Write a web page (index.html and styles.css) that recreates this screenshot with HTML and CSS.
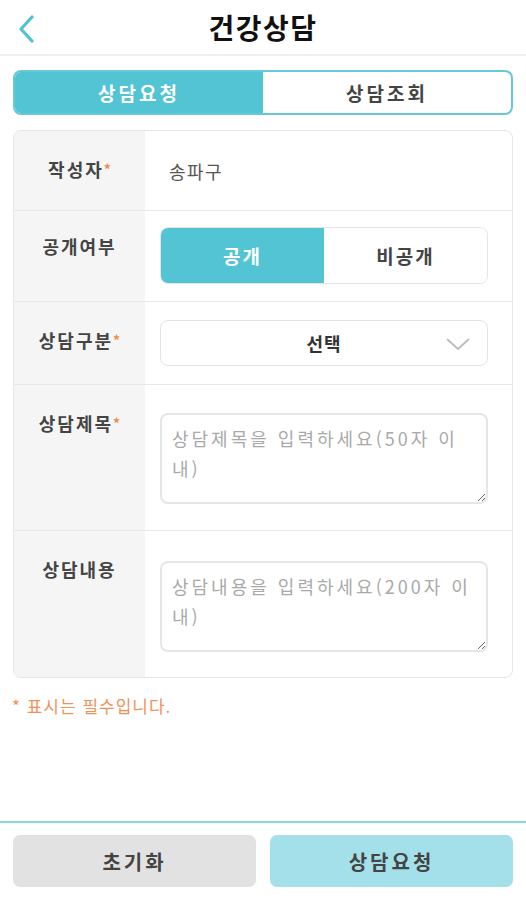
FILE: index.html
```html
<!DOCTYPE html>
<html lang="ko">
<head>
  <meta charset="UTF-8" />
  <meta name="viewport" content="width=device-width, initial-scale=1.0" />
  <title>건강상담</title>
  <link rel="stylesheet" href="styles.css">
</head>
<body>
  <header class="topo">
    <a class="voltar" href="#">
      <svg width="18" height="28" viewBox="0 0 18 28"><path d="M15 2 L4 14 L15 26" fill="none" stroke="#4dc3d1" stroke-width="3.2" stroke-linecap="round" stroke-linejoin="round"/></svg>
    </a>
    <h1>건강상담</h1>
  </header>

  <div class="abas">
    <a class="aba ativa" href="#">상담요청</a>
    <a class="aba" href="#">상담조회</a>
  </div>

  <div class="cartao">
    <div class="linha linha-autor">
      <div class="rotulo">작성자<span class="obrig">*</span></div>
      <div class="campo campo-texto">송파구</div>
    </div>
    <div class="linha">
      <div class="rotulo rotulo-alto">공개여부</div>
      <div class="campo campo-alternar">
        <div class="alternar">
          <button class="opcao ligado">공개</button>
          <button class="opcao">비공개</button>
        </div>
      </div>
    </div>
    <div class="linha">
      <div class="rotulo">상담구분<span class="obrig">*</span></div>
      <div class="campo campo-seletor">
        <div class="seletor">
          <span>선택</span>
          <svg class="seta" width="26" height="14" viewBox="0 0 26 14"><path d="M2 2 L13 12 L24 2" fill="none" stroke="#bdbdbd" stroke-width="2"/></svg>
        </div>
      </div>
    </div>
    <div class="linha linha-area">
      <div class="rotulo">상담제목<span class="obrig">*</span></div>
      <div class="campo">
        <textarea placeholder="상담제목을 입력하세요(50자 이내)"></textarea>
      </div>
    </div>
    <div class="linha linha-area ultima">
      <div class="rotulo">상담내용</div>
      <div class="campo">
        <textarea placeholder="상담내용을 입력하세요(200자 이내)"></textarea>
      </div>
    </div>
  </div>

  <p class="nota">* 표시는 필수입니다.</p>

  <footer class="rodape">
    <button class="botao cinza">초기화</button>
    <button class="botao azul">상담요청</button>
  </footer>
</body>
</html>
```

FILE: styles.css
```css
body {
  margin: 0;
  background: #fff;
  color: #333;
  font-family: "Noto Sans CJK KR", "Noto Sans", sans-serif;
}

.topo {
  height: 54px;
  border-bottom: 2px solid #efefef;
  display: flex;
  align-items: center;
  justify-content: center;
  position: relative;
}

.voltar {
  position: absolute;
  left: 17px;
  top: 15px;
}

.topo h1 {
  margin: 0;
  font-size: 28px;
  font-weight: bold;
  color: #111;
  letter-spacing: 1.5px;
}

.abas {
  display: flex;
  margin: 14px 13px 0 13px;
  height: 45px;
  border: 2px solid #66c9d6;
  border-radius: 8px;
  overflow: hidden;
  box-sizing: border-box;
}

.aba {
  flex: 1;
  display: flex;
  align-items: center;
  justify-content: center;
  font-size: 19px;
  font-weight: bold;
  letter-spacing: 3px;
  color: #444;
  text-decoration: none;
}

.aba.ativa {
  background: #52c4d3;
  color: #fff;
}

.cartao {
  margin: 15px 13px 0 13px;
  border: 1px solid #e6e6e6;
  border-radius: 8px;
  overflow: hidden;
}

.linha {
  display: grid;
  grid-template-columns: 131px 1fr;
  border-bottom: 1px solid #e8e8e8;
}

.linha.ultima {
  border-bottom: none;
}

.rotulo {
  background: #f5f5f5;
  text-align: center;
  font-size: 18px;
  font-weight: bold;
  letter-spacing: 2px;
  color: #444;
  padding-top: 26px;
  line-height: 24px;
}

.rotulo-alto {
  padding-top: 23px;
}

.obrig {
  color: #f28a4c;
  font-size: 14px;
  vertical-align: top;
  letter-spacing: 0;
}

.campo {
  padding: 17px 24px 17px 15px;
}

.linha-autor {
  height: 79px;
}

.campo-texto {
  display: flex;
  align-items: center;
  padding: 0 0 0 24px;
  font-size: 18px;
  color: #555;
  letter-spacing: 1.5px;
}

.campo-alternar {
  padding-top: 16px;
}

.alternar {
  display: flex;
  height: 57px;
  border: 1px solid #e5e5e5;
  border-radius: 8px;
  overflow: hidden;
  box-sizing: border-box;
}

.opcao {
  flex: 1;
  border: none;
  background: #fff;
  font-family: inherit;
  font-size: 19px;
  font-weight: bold;
  letter-spacing: 2px;
  color: #444;
}

.opcao.ligado {
  background: #52c4d3;
  color: #fff;
}

.campo-seletor {
  padding-top: 18px;
  padding-bottom: 18px;
}

.seletor {
  height: 46px;
  border: 1px solid #e3e3e3;
  border-radius: 8px;
  box-sizing: border-box;
  display: flex;
  align-items: center;
  justify-content: center;
  position: relative;
  font-size: 18px;
  font-weight: bold;
  color: #333;
  letter-spacing: 1px;
}

.seta {
  position: absolute;
  right: 16px;
  top: 16px;
}

.linha-area .campo {
  padding-top: 28px;
  padding-bottom: 26px;
}

.linha-area.ultima .campo {
  padding-top: 30px;
  padding-bottom: 25px;
}

textarea {
  display: block;
  width: 100%;
  height: 91px;
  box-sizing: border-box;
  border: 2px solid #e6e6e6;
  border-radius: 8px;
  padding: 8px 10px;
  font-family: inherit;
  font-size: 18px;
  line-height: 30px;
  letter-spacing: 3px;
  color: #333;
  outline: none;
}

textarea::placeholder {
  color: #a9a9a9;
}

.nota {
  margin: 15px 12px 0 12px;
  font-size: 17px;
  color: #f2925b;
  letter-spacing: 1px;
}

.rodape {
  position: absolute;
  left: 0;
  right: 0;
  top: 821px;
  border-top: 2px solid #8dd4de;
  display: flex;
  gap: 14px;
  padding: 12px 13px 0 13px;
}

.botao {
  flex: 1;
  height: 52px;
  border: none;
  border-radius: 7px;
  font-family: inherit;
  font-size: 20px;
  font-weight: bold;
  letter-spacing: 3px;
  color: #444;
}

.botao.cinza {
  background: #e2e2e2;
}

.botao.azul {
  background: #a3e0ea;
}
```
